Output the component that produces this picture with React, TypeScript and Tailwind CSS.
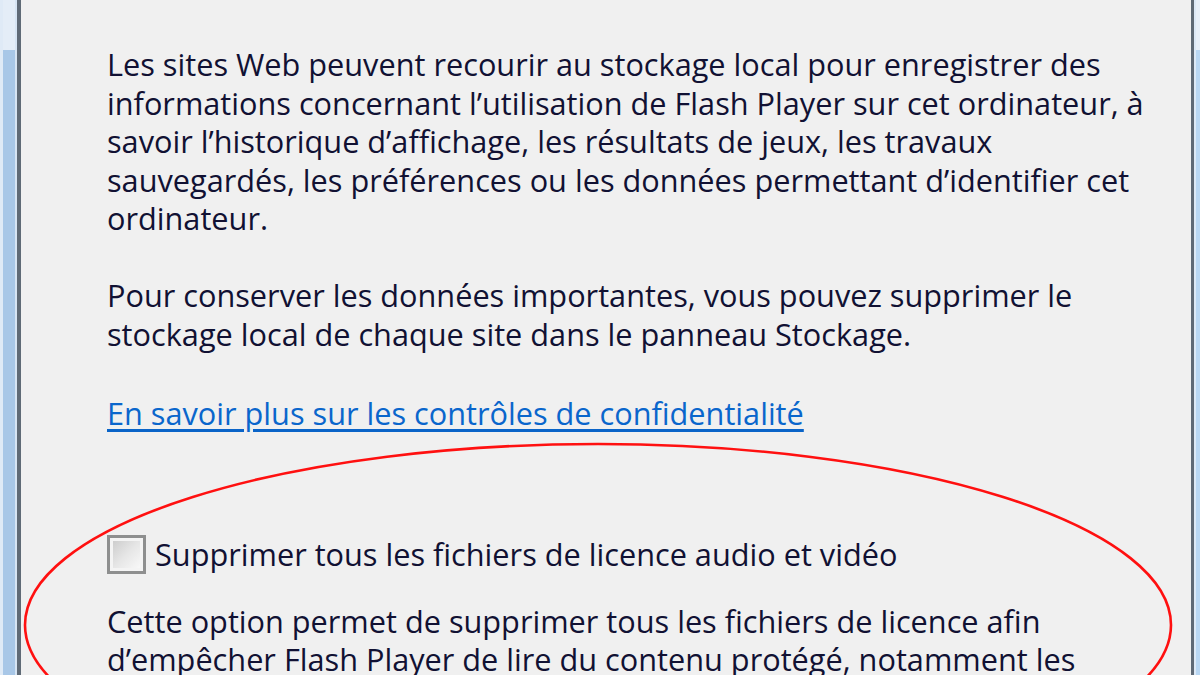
const intro = [
  'Les sites Web peuvent recourir au stockage local pour enregistrer des',
  'informations concernant l’utilisation de Flash Player sur cet ordinateur, à',
  'savoir l’historique d’affichage, les résultats de jeux, les travaux',
  'sauvegardés, les préférences ou les données permettant d’identifier cet',
  'ordinateur.',
];

const keep = [
  'Pour conserver les données importantes, vous pouvez supprimer le',
  'stockage local de chaque site dans le panneau Stockage.',
];

const licence = [
  'Cette option permet de supprimer tous les fichiers de licence afin',
  'd’empêcher Flash Player de lire du contenu protégé, notamment les',
];

function Lines({ lines }: { lines: string[] }) {
  return (
    <p>
      {lines.map((l) => (
        <span key={l} className="block whitespace-nowrap">
          {l}
        </span>
      ))}
    </p>
  );
}

function Frame({ side }: { side: 'left' | 'right' }) {
  // window border of the dialog, blue glass with a lighter band at the top
  if (side === 'left') {
    return (
      <div className="flex h-full shrink-0">
        <div className="w-[3px] bg-[#dfeaf6]" />
        <div className="flex w-[12px] flex-col">
          <div className="h-[50px] bg-[#e4edf7]" />
          <div className="flex-1 bg-[#a8c7e7]" />
        </div>
        <div className="w-[2px] bg-[#d6e4f3]" />
        <div className="w-[4px] bg-[#5f6a76]" />
      </div>
    );
  }
  return (
    <div className="flex h-full shrink-0">
      <div className="w-[3px] bg-[#5f6a76]" />
      <div className="w-[2px] bg-[#dde9f6]" />
      <div className="flex w-[4px] flex-col">
        <div className="h-[50px] bg-[#e8f0f9]" />
        <div className="flex-1 bg-[#b9d7f3]" />
      </div>
    </div>
  );
}

export default function App() {
  return (
    <div className="relative flex h-[675px] w-[1200px] overflow-hidden bg-[#f0f0f0] font-['Open_Sans','Noto_Sans',sans-serif] text-[30.7px] leading-[38.5px] text-[#111133]">
      <Frame side="left" />

      <div className="flex-1 pl-[86px] pt-[45px]">
        <Lines lines={intro} />

        <div className="mt-[38.5px]">
          <Lines lines={keep} />
        </div>

        <a
          href="#"
          className="mt-[41px] block whitespace-nowrap text-[#0a66cc] underline decoration-[#0a64c8] decoration-[3px] underline-offset-[4px]"
        >
          En savoir plus sur les contrôles de confidentialité
        </a>

        <label className="mt-[102px] flex items-center gap-[9px] whitespace-nowrap">
          <span className="flex size-[39px] shrink-0 border-[3px] border-[#8e8f8f] bg-[#f4f4f4] p-[3px]">
            <span className="flex-1 bg-gradient-to-br from-[#cdcdcd] via-[#e6e6e6] to-[#f8f8f8]" />
          </span>
          <span>Supprimer tous les fichiers de licence audio et vidéo</span>
        </label>

        <div className="mt-[28px]">
          <Lines lines={licence} />
        </div>
      </div>

      <Frame side="right" />

      {/* red hand-drawn highlight around the licence option */}
      <svg className="pointer-events-none absolute inset-0" width="1200" height="675" viewBox="0 0 1200 675">
        <ellipse cx="598" cy="625" rx="573" ry="181" fill="none" stroke="#ff1010" strokeWidth="2.6" />
      </svg>
    </div>
  );
}
